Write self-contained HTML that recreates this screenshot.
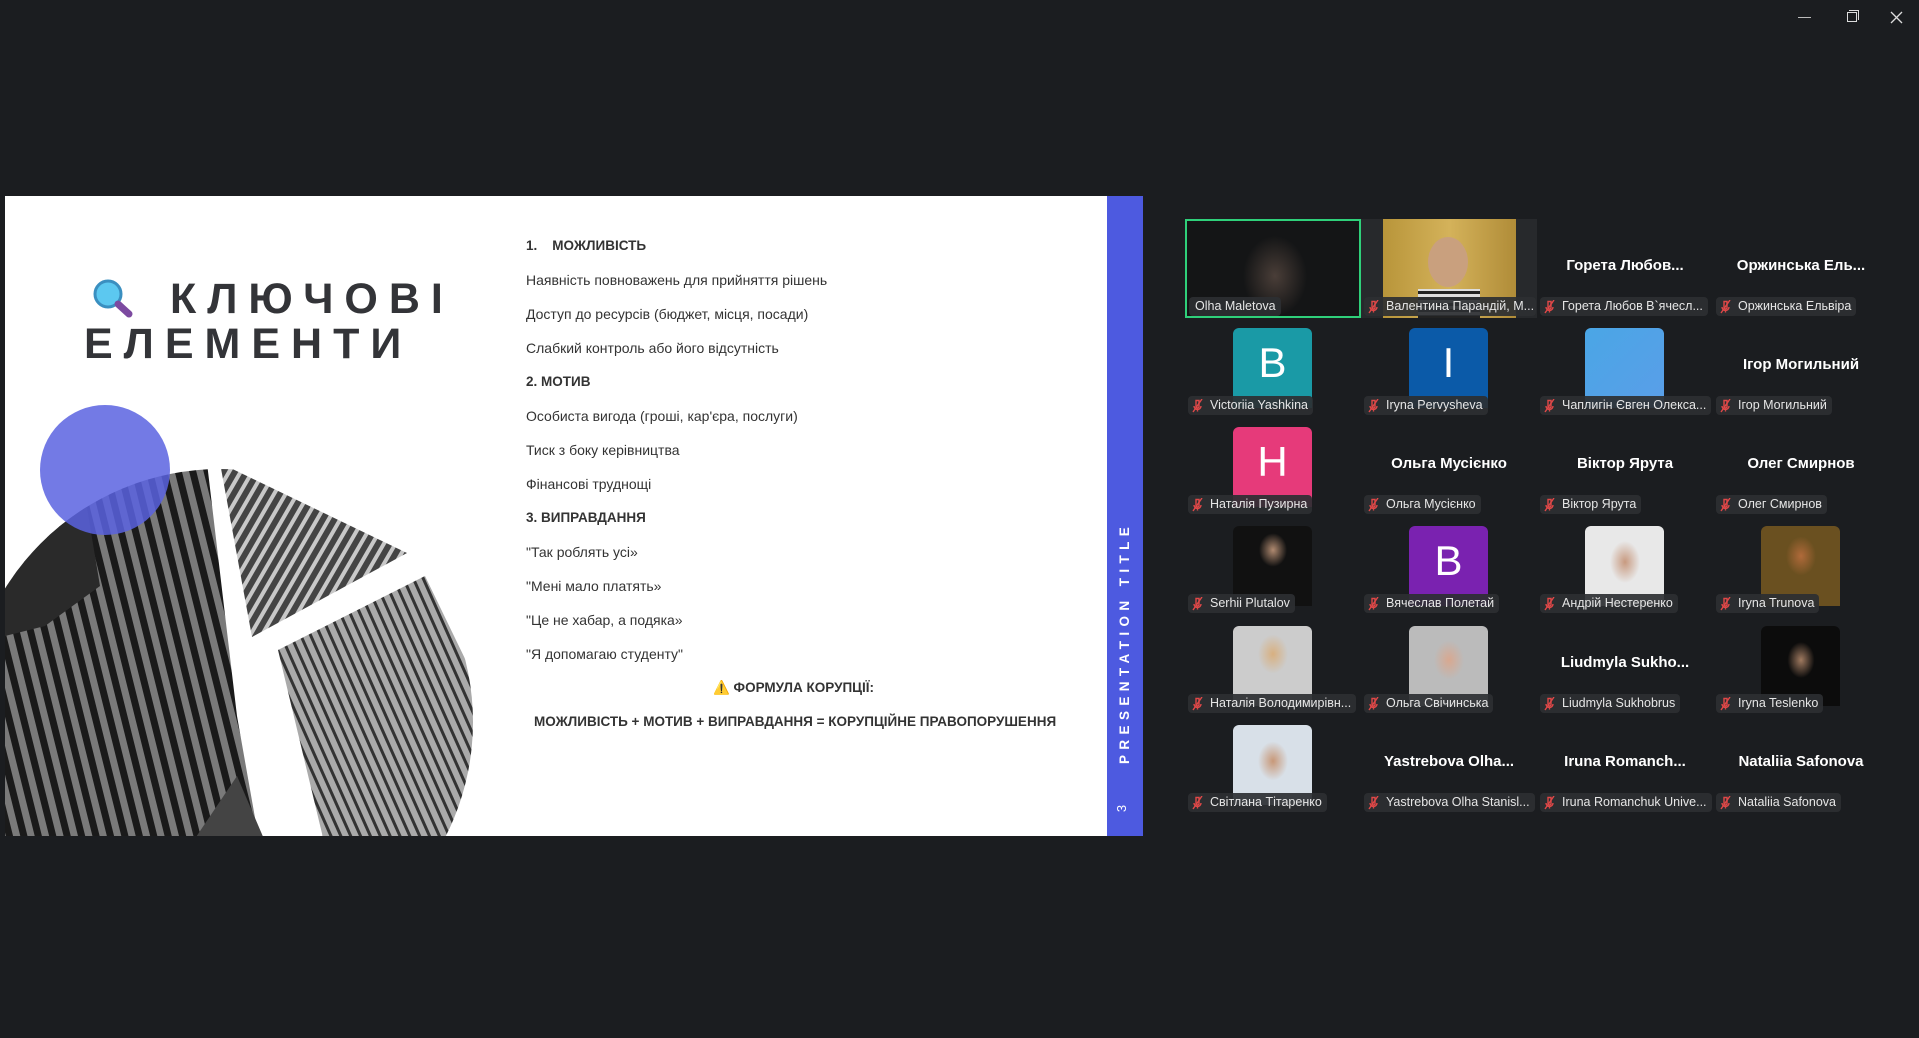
<!DOCTYPE html>
<html><head><meta charset="utf-8">
<style>
*{margin:0;padding:0;box-sizing:border-box}
body{width:1919px;height:1038px;background:#1b1d20;position:relative;overflow:hidden;font-family:"Liberation Sans","DejaVu Sans",sans-serif}
.abs{position:absolute}
#slide{position:absolute;left:5px;top:196px;width:1103px;height:640px;background:#fff;overflow:hidden}
.t{position:absolute;left:521px;font-size:14px;color:#333;white-space:nowrap;line-height:16px}
.b{font-weight:bold;font-size:13.5px}
#bar{position:absolute;left:1107px;top:196px;width:36px;height:640px;background:#4d5ae0}
.tile{position:absolute;width:176px;height:99px}
.lab{position:absolute;left:3px;top:78px;height:19px;background:rgba(45,47,50,.92);border-radius:4px;color:#e6e6e6;font-size:12.5px;line-height:19px;padding:0 5px 0 22px;white-space:nowrap;max-width:172px;overflow:hidden}
.lab svg{position:absolute;left:4px;top:3px}
.big{position:absolute;left:0;width:176px;top:38px;text-align:center;color:#fff;font-weight:bold;font-size:15px;white-space:nowrap}
.av{position:absolute;left:48px;top:10px;width:79px;height:80px;border-radius:6px 6px 0 0;color:#fff;font-size:42px;text-align:center;line-height:70px;overflow:hidden}
</style></head><body>

<div class="abs" style="left:1798px;top:17px;width:13px;height:1px;background:#bbb"></div>
<div class="abs" style="left:1847px;top:12px;width:10px;height:10px;border:1px solid #ddd"></div>
<div class="abs" style="left:1849px;top:10px;width:10px;height:10px;border-top:1px solid #ddd;border-right:1px solid #ddd"></div>
<svg class="abs" style="left:1890px;top:11px" width="13" height="13"><path d="M1 1L12 12M12 1L1 12" stroke="#ddd" stroke-width="1.3"/></svg>

<div id="slide">
<svg class="abs" style="left:0;top:0" width="1103" height="640">
<defs>
<clipPath id="c"><circle cx="215" cy="526" r="253"/></clipPath>
<pattern id="s1" width="14" height="14" patternUnits="userSpaceOnUse" patternTransform="rotate(-14)"><rect width="14" height="14" fill="#7a7a7a"/><rect width="7" height="14" fill="#1a1a1a"/></pattern>
<pattern id="s2" width="10" height="10" patternUnits="userSpaceOnUse" patternTransform="rotate(30)"><rect width="10" height="10" fill="#444"/><rect width="4" height="10" fill="#c8c8c8"/></pattern>
<pattern id="s3" width="9" height="9" patternUnits="userSpaceOnUse" patternTransform="rotate(-24)"><rect width="9" height="9" fill="#aaa"/><rect width="3" height="9" fill="#333"/></pattern>
</defs>
<g clip-path="url(#c)">
<rect x="-50" y="250" width="600" height="400" fill="#fff"/>
<polygon points="-10,320 200,250 232,520 255,650 60,650 -10,650" fill="url(#s1)"/>
<polygon points="0,330 80,300 95,390 40,430 0,440" fill="#2a2a2a"/>
<polygon points="215,267 402,357 247,441" fill="url(#s2)"/>
<polygon points="273,454 420,380 478,500 470,650 320,650" fill="url(#s3)"/>
<polygon points="185,650 232,580 262,650" fill="#444"/>
</g>
<circle cx="100" cy="274" r="65" fill="#5a63e0" fill-opacity=".85"/>
</svg>
<svg class="abs" style="left:87px;top:82px" width="46" height="42"><circle cx="16" cy="16" r="13" fill="#5cc8f0" stroke="#3a8fc0" stroke-width="3"/><line x1="26" y1="26" x2="37" y2="36" stroke="#7c4aa0" stroke-width="7" stroke-linecap="round"/></svg>
<div class="abs" style="left:165px;top:80px;font-size:43px;font-weight:bold;color:#333438;letter-spacing:11px;line-height:46px">КЛЮЧОВІ</div>
<div class="abs" style="left:79px;top:125px;font-size:43px;font-weight:bold;color:#333438;letter-spacing:11px;line-height:46px">ЕЛЕМЕНТИ</div>

<div class="t b" style="top:42px">1.&nbsp;&nbsp;&nbsp;&nbsp;МОЖЛИВІСТЬ</div>
<div class="t" style="top:76px">Наявність повноважень для прийняття рішень</div>
<div class="t" style="top:110px">Доступ до ресурсів (бюджет, місця, посади)</div>
<div class="t" style="top:144px">Слабкий контроль або його відсутність</div>
<div class="t b" style="top:178px">2. МОТИВ</div>
<div class="t" style="top:212px">Особиста вигода (гроші, кар'єра, послуги)</div>
<div class="t" style="top:246px">Тиск з боку керівництва</div>
<div class="t" style="top:280px">Фінансові труднощі</div>
<div class="t b" style="top:314px">3. ВИПРАВДАННЯ</div>
<div class="t" style="top:348px">"Так роблять усі»</div>
<div class="t" style="top:382px">"Мені мало платять»</div>
<div class="t" style="top:416px">"Це не хабар, а подяка»</div>
<div class="t" style="top:450px">"Я допомагаю студенту"</div>
<div class="t b" style="top:484px;left:708px">⚠️ ФОРМУЛА КОРУПЦІЇ:</div>
<div class="t b" style="top:518px;left:529px">МОЖЛИВІСТЬ + МОТИВ + ВИПРАВДАННЯ = КОРУПЦІЙНЕ ПРАВОПОРУШЕННЯ</div>
</div>

<div id="bar">
<div class="abs" style="left:11px;top:568px;transform:rotate(-90deg);transform-origin:0 0;color:#fff;font-weight:bold;font-size:13.5px;letter-spacing:5.4px;white-space:nowrap;line-height:14px">PRESENTATION TITLE</div>
<div class="abs" style="left:11px;top:605px;transform:rotate(-90deg);color:#fff;font-size:13px">3</div>
</div>

<svg width="0" height="0" style="position:absolute"><defs><g id="mic"><path d="M4 1.5h3v6a1.5 1.5 0 0 1-3 0z M2 7a3.5 3.5 0 0 0 7 0 M5.5 10.5v2" fill="none" stroke="#e04848" stroke-width="1.4"/><line x1="1" y1="13" x2="10" y2="0" stroke="#e04848" stroke-width="1.4"/></g></defs></svg>

<div class="tile" style="left:1185px;top:219px;border:2px solid #2fd07a;background:radial-gradient(ellipse 40px 50px at 88px 55px,#4a3e38,#141516 80%)"><div class="lab" style="left:2px;top:76px;padding-left:6px">Olha Maletova</div></div>
<div class="tile" style="left:1361px;top:219px;background:#27292c"><div class="abs" style="left:22px;top:0;width:133px;height:99px;background:linear-gradient(90deg,#b8953a,#d4b25a 50%,#b08c38)"><div class="abs" style="left:35px;top:70px;width:62px;height:29px;background:repeating-linear-gradient(0deg,#222 0 3px,#ddd 3px 6px)"></div><div class="abs" style="left:45px;top:18px;width:40px;height:50px;border-radius:50%;background:#c9a07e"></div></div><div class="lab"><svg width="11" height="14"><use href="#mic"/></svg>Валентина Парандій, М...</div></div>
<div class="tile" style="left:1537px;top:219px"><div class="big">Горета Любов...</div><div class="lab"><svg width="11" height="14"><use href="#mic"/></svg>Горета Любов В`ячесл...</div></div>
<div class="tile" style="left:1713px;top:219px"><div class="big">Оржинська Ель...</div><div class="lab"><svg width="11" height="14"><use href="#mic"/></svg>Оржинська Ельвіра</div></div>
<div class="tile" style="left:1185px;top:318px"><div class="av" style="background:#1a9aa6">B</div><div class="lab"><svg width="11" height="14"><use href="#mic"/></svg>Victoriia Yashkina</div></div>
<div class="tile" style="left:1361px;top:318px"><div class="av" style="background:#0b5aa8">I</div><div class="lab"><svg width="11" height="14"><use href="#mic"/></svg>Iryna Pervysheva</div></div>
<div class="tile" style="left:1537px;top:318px"><div class="av" style="background:linear-gradient(135deg,#4aa6e6,#5a9ee8)"></div><div class="lab"><svg width="11" height="14"><use href="#mic"/></svg>Чаплигін Євген Олекса...</div></div>
<div class="tile" style="left:1713px;top:318px"><div class="big">Ігор Могильний</div><div class="lab"><svg width="11" height="14"><use href="#mic"/></svg>Ігор Могильний</div></div>
<div class="tile" style="left:1185px;top:417px"><div class="av" style="background:#e63a7a">H</div><div class="lab"><svg width="11" height="14"><use href="#mic"/></svg>Наталія Пузирна</div></div>
<div class="tile" style="left:1361px;top:417px"><div class="big">Ольга Мусієнко</div><div class="lab"><svg width="11" height="14"><use href="#mic"/></svg>Ольга Мусієнко</div></div>
<div class="tile" style="left:1537px;top:417px"><div class="big">Віктор Ярута</div><div class="lab"><svg width="11" height="14"><use href="#mic"/></svg>Віктор Ярута</div></div>
<div class="tile" style="left:1713px;top:417px"><div class="big">Олег Смирнов</div><div class="lab"><svg width="11" height="14"><use href="#mic"/></svg>Олег Смирнов</div></div>
<div class="tile" style="left:1185px;top:516px"><div class="av" style="background:radial-gradient(ellipse 20px 24px at 40px 24px,#b08a70,#111 70%)"></div><div class="lab"><svg width="11" height="14"><use href="#mic"/></svg>Serhii Plutalov</div></div>
<div class="tile" style="left:1361px;top:516px"><div class="av" style="background:#7a22b0">B</div><div class="lab"><svg width="11" height="14"><use href="#mic"/></svg>Вячеслав Полетай</div></div>
<div class="tile" style="left:1537px;top:516px"><div class="av" style="background:radial-gradient(ellipse 20px 28px at 40px 36px,#c89a80,#e8e8e8 75%)"></div><div class="lab"><svg width="11" height="14"><use href="#mic"/></svg>Андрій Нестеренко</div></div>
<div class="tile" style="left:1713px;top:516px"><div class="av" style="background:radial-gradient(ellipse 20px 26px at 40px 30px,#b06a3a,#6a5020 75%)"></div><div class="lab"><svg width="11" height="14"><use href="#mic"/></svg>Iryna Trunova</div></div>
<div class="tile" style="left:1185px;top:616px"><div class="av" style="background:radial-gradient(ellipse 20px 26px at 40px 28px,#d8b080,#ccc 75%)"></div><div class="lab"><svg width="11" height="14"><use href="#mic"/></svg>Наталія  Володимирівн...</div></div>
<div class="tile" style="left:1361px;top:616px"><div class="av" style="background:radial-gradient(ellipse 20px 26px at 40px 34px,#d8a890,#bbb 75%)"></div><div class="lab"><svg width="11" height="14"><use href="#mic"/></svg>Ольга Свічинська</div></div>
<div class="tile" style="left:1537px;top:616px"><div class="big">Liudmyla  Sukho...</div><div class="lab"><svg width="11" height="14"><use href="#mic"/></svg>Liudmyla Sukhobrus</div></div>
<div class="tile" style="left:1713px;top:616px"><div class="av" style="background:radial-gradient(ellipse 18px 24px at 40px 34px,#a07a60,#0c0c0c 75%)"></div><div class="lab"><svg width="11" height="14"><use href="#mic"/></svg>Iryna Teslenko</div></div>
<div class="tile" style="left:1185px;top:715px"><div class="av" style="background:radial-gradient(ellipse 20px 26px at 40px 36px,#c89878,#d8e0e8 75%)"></div><div class="lab"><svg width="11" height="14"><use href="#mic"/></svg>Світлана Тітаренко</div></div>
<div class="tile" style="left:1361px;top:715px"><div class="big">Yastrebova  Olha...</div><div class="lab"><svg width="11" height="14"><use href="#mic"/></svg>Yastrebova Olha Stanisl...</div></div>
<div class="tile" style="left:1537px;top:715px"><div class="big">Iruna  Romanch...</div><div class="lab"><svg width="11" height="14"><use href="#mic"/></svg>Iruna Romanchuk  Unive...</div></div>
<div class="tile" style="left:1713px;top:715px"><div class="big">Nataliia Safonova</div><div class="lab"><svg width="11" height="14"><use href="#mic"/></svg>Nataliia Safonova</div></div>

</body></html>
